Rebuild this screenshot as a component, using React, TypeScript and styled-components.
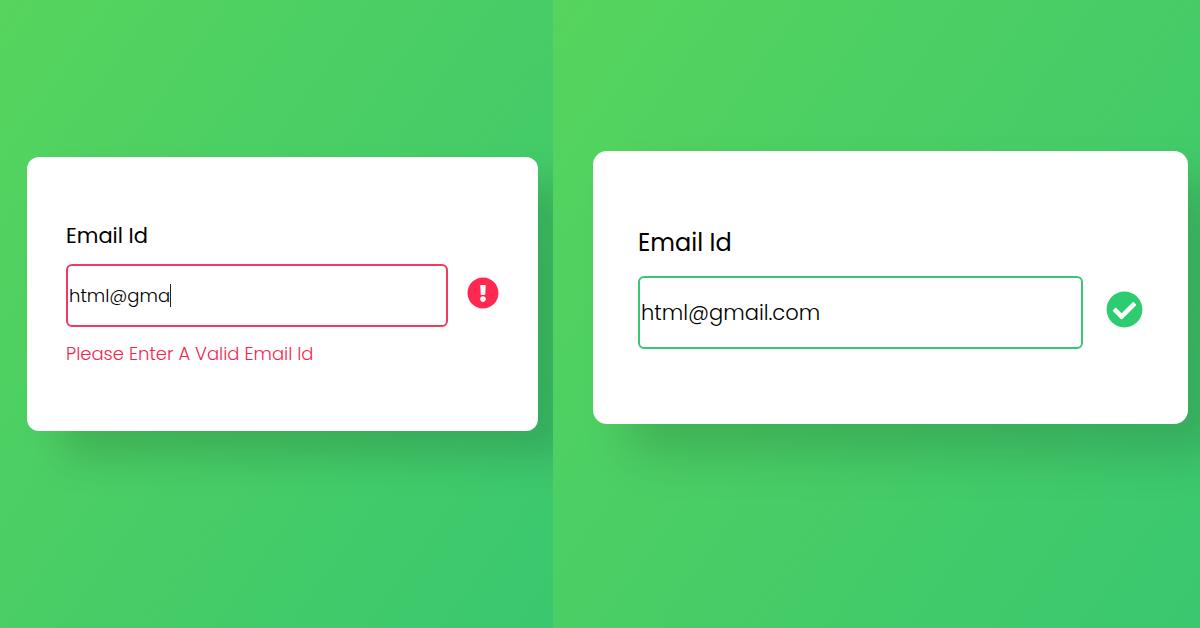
import React from "react";
import styled, { createGlobalStyle, css } from "styled-components";

const GlobalStyle = createGlobalStyle`
  *, *::before, *::after { box-sizing: border-box; }
  body {
    margin: 0;
    font-family: Poppins, Inter, "Open Sans", sans-serif;
  }
`;

type Size = "regular" | "large";
type Status = "invalid" | "valid";

const statusColor = { invalid: "#ff2851", valid: "#2ecc71" };
const borderColor = { invalid: "#f03a60", valid: "#3cc47a" };

const Page = styled.main`
  display: grid;
  grid-template-columns: 553fr 647fr;
  min-height: 100vh;
`;

const Panel = styled.section<{ $size: Size }>`
  display: flex;
  align-items: center;
  overflow: hidden;
  background: linear-gradient(125deg, #56d45d, #3ac76f);
  ${({ $size }) =>
    $size === "large"
      ? css`
          padding: 0 12px 53px 40px;
        `
      : css`
          padding: 0 15px 40px 27px;
        `}
`;

const Card = styled.form<{ $size: Size }>`
  flex: 1;
  min-width: 0;
  background: #fff;
  ${({ $size }) =>
    $size === "large"
      ? css`
          padding: 75px 45px;
          border-radius: 14px;
          box-shadow: 36px 30px 48px rgba(0, 0, 0, 0.15);
        `
      : css`
          padding: 64px 39px 62px;
          border-radius: 12px;
          box-shadow: 34px 26px 40px rgba(0, 0, 0, 0.15);
        `}
`;

const Label = styled.label<{ $size: Size }>`
  display: block;
  color: #000;
  font-weight: 400;
  ${({ $size }) =>
    $size === "large"
      ? css`
          margin-bottom: 17px;
          font-size: 24px;
          line-height: 33px;
        `
      : css`
          margin-bottom: 13px;
          font-size: 21px;
          line-height: 30px;
        `}
`;

const Row = styled.div<{ $size: Size }>`
  display: flex;
  align-items: center;
  gap: ${({ $size }) => ($size === "large" ? 23 : 19)}px;
`;

const Field = styled.div`
  position: relative;
  flex: 1;
  min-width: 0;
`;

const Input = styled.input<{ $size: Size; $status: Status }>`
  display: block;
  width: 100%;
  height: ${({ $size }) => ($size === "large" ? 73 : 63)}px;
  padding: 0 1px 1px;
  border: 2px solid ${({ $status }) => borderColor[$status]};
  border-radius: 6px;
  outline: none;
  background: transparent;
  color: #000;
  font-family: inherit;
  font-size: ${({ $size }) => ($size === "large" ? 21 : 18)}px;
  font-weight: 300;
`;

const Caret = styled.span`
  position: absolute;
  top: 20px;
  left: 104px;
  width: 1px;
  height: 23px;
  background: #222;
`;

const Icon = styled.svg<{ $size: Size; $status: Status }>`
  flex: none;
  width: ${({ $size }) => ($size === "large" ? 37 : 32)}px;
  height: ${({ $size }) => ($size === "large" ? 37 : 32)}px;
  margin-bottom: 6px;
  fill: ${({ $status }) => statusColor[$status]};
`;

const ErrorText = styled.p`
  margin: 13px 0 0;
  padding-bottom: 1px;
  color: #f0284f;
  font-size: 18px;
  font-weight: 300;
  line-height: 28px;
`;

const StatusIcon = ({ size, status }: { size: Size; status: Status }) => (
  <Icon viewBox="0 0 512 512" $size={size} $status={status} aria-hidden="true">
    {status === "valid" ? (
      <path d="M504 256c0 136.967-111.033 248-248 248S8 392.967 8 256 119.033 8 256 8s248 111.033 248 248zM227.314 387.314l184-184c6.248-6.248 6.248-16.379 0-22.627l-22.627-22.627c-6.248-6.249-16.379-6.249-22.628 0L216 308.118l-70.059-70.059c-6.248-6.248-16.379-6.248-22.628 0l-22.627 22.627c-6.248 6.248-6.248 16.379 0 22.627l104 104c6.249 6.249 16.379 6.249 22.628.001z" />
    ) : (
      <path d="M504 256c0 136.997-111.043 248-248 248S8 392.997 8 256C8 119.083 119.043 8 256 8s248 111.083 248 248zm-248 50c-25.405 0-46 20.595-46 46s20.595 46 46 46 46-20.595 46-46-20.595-46-46-46zm-43.673-165.346l7.418 136c.347 6.364 5.609 11.346 11.982 11.346h48.546c6.373 0 11.635-4.982 11.982-11.346l7.418-136c.375-6.874-5.098-12.654-11.982-12.654h-63.383c-6.884 0-12.356 5.78-11.981 12.654z" />
    )}
  </Icon>
);

interface EmailCardProps {
  id: string;
  size: Size;
  status: Status;
  value: string;
  error?: string;
}

const EmailCard = ({ id, size, status, value, error }: EmailCardProps) => (
  <Panel $size={size}>
    <Card $size={size} noValidate>
      <Label $size={size} htmlFor={id}>
        Email Id
      </Label>
      <Row $size={size}>
        <Field>
          <Input
            id={id}
            type="email"
            defaultValue={value}
            $size={size}
            $status={status}
            aria-invalid={status === "invalid"}
            aria-describedby={error ? `${id}-error` : undefined}
          />
          {status === "invalid" && <Caret />}
        </Field>
        <StatusIcon size={size} status={status} />
      </Row>
      {error && <ErrorText id={`${id}-error`}>{error}</ErrorText>}
    </Card>
  </Panel>
);

export default function App() {
  return (
    <>
      <GlobalStyle />
      <Page>
        <EmailCard
          id="email-invalid"
          size="regular"
          status="invalid"
          value="html@gma"
          error="Please Enter A Valid Email Id"
        />
        <EmailCard id="email-valid" size="large" status="valid" value="html@gmail.com" />
      </Page>
    </>
  );
}
